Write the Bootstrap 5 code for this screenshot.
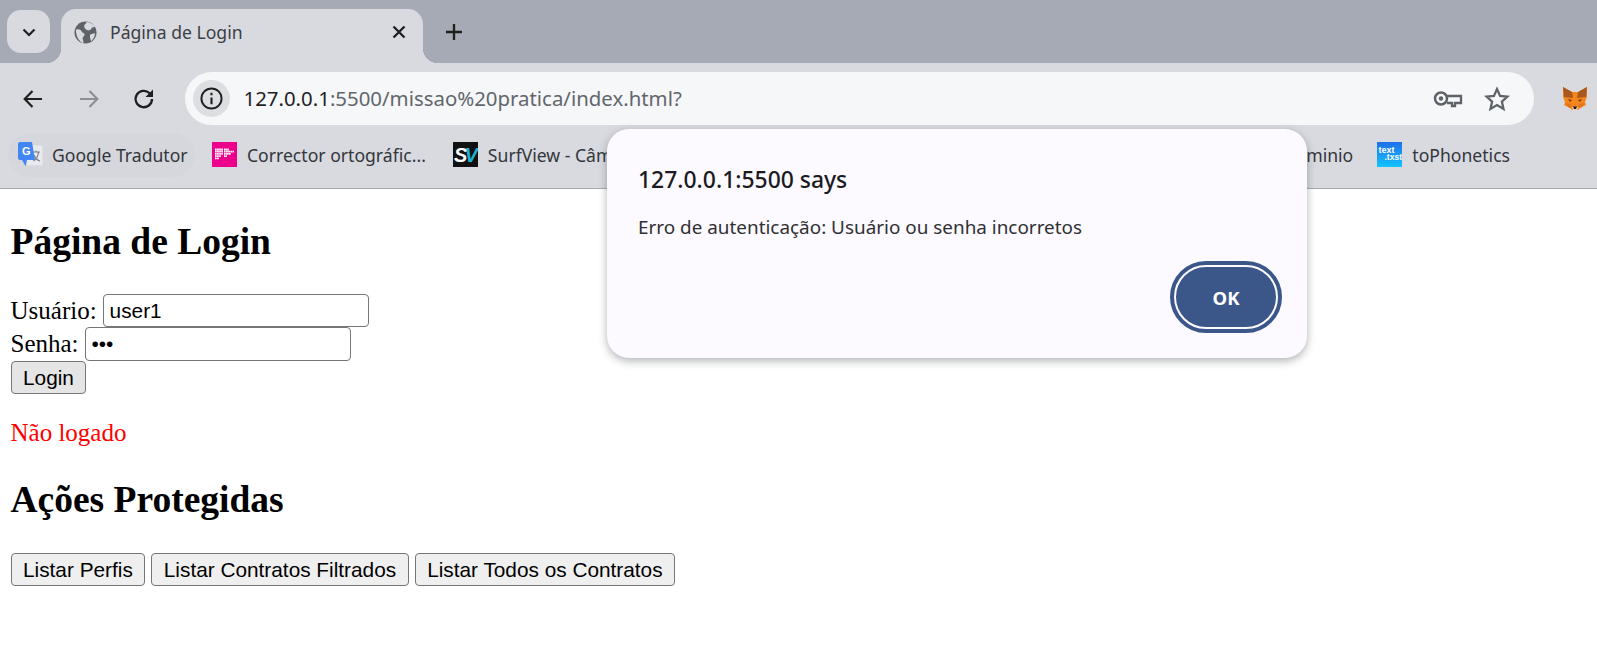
<!DOCTYPE html>
<html lang="pt-BR">
<head>
  <meta charset="UTF-8" />
  <meta name="viewport" content="width=device-width, initial-scale=1.0" />
  <title>Página de Login</title>
  <link href="https://cdn.jsdelivr.net/npm/bootstrap@5.3.2/dist/css/bootstrap.min.css" rel="stylesheet" />
  <style>
    html, body { height: 100%; }
    body {
      background: #fff;
      color: #000;
      overflow: hidden;
      font-family: "Liberation Serif", serif;
      font-size: 25px;
      line-height: normal;
    }

    /* browser chrome */
    .chrome { font-family: "Noto Sans", sans-serif; color: #1f1f1f; }
    .tab-strip { height: 63px; background: #a6aab5; padding-left: 7px; }
    .tab-list-btn {
      width: 43px; height: 43px; margin-top: 10px;
      background: #d8dae0; border-radius: 14px;
    }
    .tab-item {
      position: relative;
      width: 362px; height: 54px;
      margin: 9px 0 0 11px;
      padding: 0 14px 8px 13px;
      background: #d8dae0;
      border-radius: 15px 15px 0 0;
      font-size: 17.6px;
      color: #3c3f44;
    }
    .tab-item::before, .tab-item::after {
      content: "";
      position: absolute;
      bottom: 0;
      width: 15px; height: 15px;
    }
    .tab-item::before { left: -15px; background: radial-gradient(circle at 0 0, transparent 15px, #d8dae0 15.5px); }
    .tab-item::after { right: -15px; background: radial-gradient(circle at 100% 0, transparent 15px, #d8dae0 15.5px); }
    .tab-title { margin-left: 13px; }
    .tab-new { margin-left: 19px; margin-top: 20px; }

    .tool-bar { height: 62px; background: #d8dae0; padding: 9px 9px 0 11px; }
    .tool-btn { width: 44px; margin-right: 11.5px; }
    .omni {
      height: 53px; margin-left: 7px;
      background: #f5f7f9;
      border-radius: 27px;
      padding: 0 24px 0 8px;
    }
    .omni-info { width: 37px; height: 37px; border-radius: 50%; background: #dcdee2; }
    .omni-url { margin-left: 14px; padding-bottom: 2px; font-size: 20.4px; color: #62666c; white-space: nowrap; }
    .omni-url b { font-weight: 400; color: #1f1f1f; }
    .omni-key { margin-right: 21px; }
    .fox-wrap { margin-left: 28px; }

    .mark-bar {
      height: 64px;
      background: #d8dae0;
      border-bottom: 1px solid #a9abb1;
      font-size: 17.6px;
      padding: 0 87px 4px 8px;
      color: #33363b;
    }
    .mark-item { white-space: nowrap; height: 36px; }
    .mark-icon { width: 25px; height: 25px; flex: none; }
    .mark-active { background: #d5d7dd; border-radius: 22px; width: 187px; height: 44px; padding-left: 10px; }
    .mark-active .mark-icon { margin-right: 9px; }
    .mark-pink { margin-left: 17px; }
    .mark-dark { margin-left: 27px; }
    .mark-item .mark-label { margin-left: 10px; }
    .mark-last { margin-left: 24px; }

    /* page */
    .page-area { padding: 32px 10.5px 0; }
    .page-area h1, .page-area h2 { font-family: inherit; font-weight: 700; font-size: 37.5px; line-height: 42px; }
    .page-area h1 { margin: 0 0 31px; }
    .page-area h2 { margin: 32px 0 32px; }
    .form-line { display: flex; align-items: center; }
    .form-line label { margin: 0 6px 0 0; }
    .plain-input {
      width: 266px; height: 33px;
      border: 1px solid #767676;
      border-radius: 4px;
      padding: 0 6px;
      font: 20.8px "Liberation Sans", sans-serif;
      color: #000;
      background: #fff;
      outline: 0;
    }
    #pass { height: 34px; }
    .plain-btn {
      height: 33px;
      border: 1px solid #767676;
      border-radius: 4px;
      background: #efefef;
      color: #000;
      padding: 0 11.5px;
      font: 20.8px "Liberation Sans", sans-serif;
    }
    .plain-btn.hover-btn { background: #e5e5e5; }
    .status-off { color: #f00; margin: 0; line-height: 28px; padding-top: 25px; }
    .action-row { gap: 6px; }

    /* alert */
    .alert-box {
      position: absolute;
      left: 607px; top: 129px;
      width: 700px; height: 229px;
      background: #fcfaff;
      border-radius: 22px;
      box-shadow: 0 3px 8px rgba(60, 64, 67, .4);
      padding: 35px 25px 0 31px;
      font-family: "Noto Sans", sans-serif;
      color: #1f1f1f;
    }
    .alert-title { font-size: 22.9px; font-weight: 500; line-height: 32px; margin: 0; color: #1b1b1f; }
    .alert-text { font-size: 18.9px; line-height: 26px; margin: 18px 0 0; color: #303034; }
    .alert-ok {
      width: 112px; height: 72px;
      margin-top: 21px;
      border: 3px solid #fcfaff;
      outline: 4px solid #3b5789;
      outline-offset: -4px;
      box-shadow: inset 0 0 0 3px #fcfaff;
      border-radius: 36px;
      background: #3b5789;
      color: #fff;
      font-size: 18.5px;
      font-weight: 700;
    }
  </style>
</head>
<body>
  <div class="chrome">
    <div class="tab-strip d-flex">
      <div class="tab-list-btn d-flex align-items-center justify-content-center">
        <svg width="16" height="16" viewBox="0 0 16 16"><path d="M2.5 5.5 8 11l5.500-5.500" fill="none" stroke="#1f1f1f" stroke-width="2.200"/></svg>
      </div>
      <div class="tab-item d-flex align-items-center">
        <svg width="23" height="23" viewBox="0 0 24 24"><circle cx="12" cy="12" r="11.500" fill="#5f6368"/><path d="M2 9c3-1 5 0 6 2s3 1 3 3-2 2-2 4 1 3 1 5c-4-1-8-6-8-14zM13 1c3 0 7 2 9 5-2 1-3 0-4 2s-3 2-5 1-3-3-2-5 2-1 2-3zM17 14c2-1 4-1 5-1 0 3-2 6-4 8-1-2-2-5-1-7z" fill="#d8dae0"/></svg>
        <span class="tab-title">Página de Login</span>
        <svg class="ms-auto" width="20" height="20" viewBox="0 0 20 20"><path d="M4.500 4.500l11 11m0-11l-11 11" stroke="#1f1f1f" stroke-width="2.300"/></svg>
      </div>
      <svg class="tab-new" width="24" height="24" viewBox="0 0 24 24"><path d="M12 4v16M4 12h16" stroke="#1f1f1f" stroke-width="2.300"/></svg>
    </div>

    <div class="tool-bar d-flex align-items-center">
      <div class="tool-btn d-flex justify-content-center">
        <svg width="24" height="24" viewBox="0 0 24 24"><path d="M21 12H4M11.500 4 3.700 12l7.800 8" fill="none" stroke="#1f1f1f" stroke-width="2.200"/></svg>
      </div>
      <div class="tool-btn d-flex justify-content-center">
        <svg width="24" height="24" viewBox="0 0 24 24"><path d="M3 12h17M12.500 4l7.800 8-7.800 8" fill="none" stroke="#8d8f94" stroke-width="2.200"/></svg>
      </div>
      <div class="tool-btn d-flex justify-content-center">
        <svg width="24" height="24" viewBox="0 0 24 24"><path d="M20 12a8.200 8.200 0 1 1-2.400-5.800L20 8.600" fill="none" stroke="#1f1f1f" stroke-width="2.300"/><path d="M21 2.500V10h-7.500z" fill="#1f1f1f"/></svg>
      </div>
      <div class="omni d-flex align-items-center flex-grow-1">
        <div class="omni-info d-flex align-items-center justify-content-center">
          <svg width="23" height="23" viewBox="0 0 24 24"><circle cx="12" cy="12" r="10.500" fill="none" stroke="#1f1f1f" stroke-width="2"/><path d="M12 11v7M12 6v2.500" stroke="#1f1f1f" stroke-width="2.200"/></svg>
        </div>
        <div class="omni-url"><b>127.0.0.1</b>:5500/missao%20pratica/index.html?</div>
        <svg class="omni-key ms-auto" width="30" height="18" viewBox="0 0 30 18"><circle cx="8" cy="8.500" r="6" fill="none" stroke="#5f6368" stroke-width="2.500"/><circle cx="8" cy="8.500" r="2.200" fill="#5f6368"/><path d="M14 6h14v7h-6v3h-3v-3h-5" fill="none" stroke="#5f6368" stroke-width="2.300"/></svg>
        <svg width="26" height="26" viewBox="0 0 24 24"><path d="M12 2.800l2.800 6.300 6.800.7-5.100 4.600 1.500 6.700-6-3.500-6 3.500 1.500-6.700-5.100-4.600 6.800-.7z" fill="none" stroke="#5f6368" stroke-width="2.100" stroke-linejoin="miter"/></svg>
      </div>
      <div class="fox-wrap d-flex">
        <svg width="26" height="25" viewBox="0 0 26 25">
          <path d="M1 1l9 5h6l9-5 0 10-2 5 1 3-6 3-2 2h-6l-2-2-6-3 1-3-2-5z" fill="#f6851b"/>
          <path d="M1 1l9 5 1 6-9-1zM25 1l-9 5-1 6 9-1z" fill="#a8581f"/>
          <path d="M6 13l4 1-2 2zM20 13l-4 1 2 2z" fill="#763d16"/>
          <path d="M3 17l6 1 1 3-3 1zM23 17l-6 1-1 3 3 1z" fill="#e4761b"/>
          <path d="M10 21h6l-1 3h-4z" fill="#e8d3c0"/>
          <path d="M11 20.500h4l-1 2.500h-2z" fill="#1c1c1c"/>
        </svg>
      </div>
    </div>

    <div class="mark-bar d-flex align-items-center">
      <div class="mark-item mark-active d-flex align-items-center">
        <svg class="mark-icon" viewBox="0 0 25 25">
          <rect x="9" y="3.500" width="15.500" height="20" rx="1.500" fill="#e8eaed"/>
          <path d="M14 10h8M18 8.500v2M15.500 19c3-2 4.500-4.500 5-8.500M16 13c1 3 3 5 6 6" fill="none" stroke="#7b8088" stroke-width="1.200"/>
          <path d="M2 0h12l3 18H9l-1.500 6L4 18H2a2 2 0 0 1-2-2V2a2 2 0 0 1 2-2z" fill="#4285f4"/>
          <text x="4" y="12.500" font-family="Liberation Sans, sans-serif" font-size="11" font-weight="700" fill="#fff">G</text>
        </svg>
        <span>Google Tradutor</span>
      </div>
      <div class="mark-item mark-pink d-flex align-items-center">
        <svg class="mark-icon" viewBox="0 0 25 25">
          <rect width="25" height="25" fill="#ec008c"/>
          <path d="M3 7.500h8M3 9.700h8M3 11.900h8M3 14.100h6M3 16.300h4M12 7.500h5M12 9.700h10M12 11.900h7M12 14.100h3" stroke="#fff" stroke-width="1.800" stroke-dasharray="1.700 .4" fill="none"/>
        </svg>
        <span class="mark-label">Corrector ortográfic...</span>
      </div>
      <div class="mark-item mark-dark d-flex align-items-center">
        <svg class="mark-icon" viewBox="0 0 25 25">
          <rect width="25" height="25" fill="#111"/>
          <text x="1" y="19.500" font-family="Liberation Sans, sans-serif" font-size="20" font-weight="700" font-style="italic" fill="#fff">S</text>
          <text x="11.500" y="19.500" font-family="Liberation Sans, sans-serif" font-size="20" font-weight="700" font-style="italic" fill="#18b4d8">V</text>
        </svg>
        <span class="mark-label">SurfView - Câmeras</span>
      </div>
      <div class="mark-item ms-auto d-flex align-items-center">
        <span>Dominio</span>
      </div>
      <div class="mark-item mark-last d-flex align-items-center">
        <svg class="mark-icon" viewBox="0 0 25 25">
          <defs><linearGradient id="tpGrad" x1="0" y1="0" x2="0" y2="1"><stop offset="0" stop-color="#1f6fe8"/><stop offset="1" stop-color="#13c4ff"/></linearGradient></defs>
          <rect width="25" height="25" fill="url(#tpGrad)"/>
          <text x="1.500" y="11" font-family="Liberation Sans, sans-serif" font-size="9" font-weight="700" fill="#fff">text</text>
          <text x="7.500" y="18" font-family="Liberation Sans, sans-serif" font-size="8.500" font-weight="700" fill="#fff">.txst</text>
        </svg>
        <span class="mark-label">toPhonetics</span>
      </div>
    </div>
  </div>

  <main class="page-area">
    <h1>Página de Login</h1>
    <form onsubmit="return false">
      <div class="form-line">
        <label for="user">Usuário:</label>
        <input class="plain-input" id="user" type="text" value="user1" />
      </div>
      <div class="form-line">
        <label for="pass">Senha:</label>
        <input class="plain-input" id="pass" type="password" value="123" />
      </div>
      <div class="form-line">
        <button class="plain-btn hover-btn" type="submit">Login</button>
      </div>
    </form>
    <p class="status-off">Não logado</p>
    <h2>Ações Protegidas</h2>
    <div class="action-row d-flex">
      <button class="plain-btn" type="button">Listar Perfis</button>
      <button class="plain-btn" type="button">Listar Contratos Filtrados</button>
      <button class="plain-btn" type="button">Listar Todos os Contratos</button>
    </div>
  </main>

  <div class="alert-box" role="alertdialog">
    <p class="alert-title">127.0.0.1:5500 says</p>
    <p class="alert-text">Erro de autenticação: Usuário ou senha incorretos</p>
    <div class="d-flex justify-content-end">
      <button class="alert-ok" type="button">OK</button>
    </div>
  </div>

  <script src="https://cdn.jsdelivr.net/npm/bootstrap@5.3.2/dist/js/bootstrap.bundle.min.js"></script>
</body>
</html>
